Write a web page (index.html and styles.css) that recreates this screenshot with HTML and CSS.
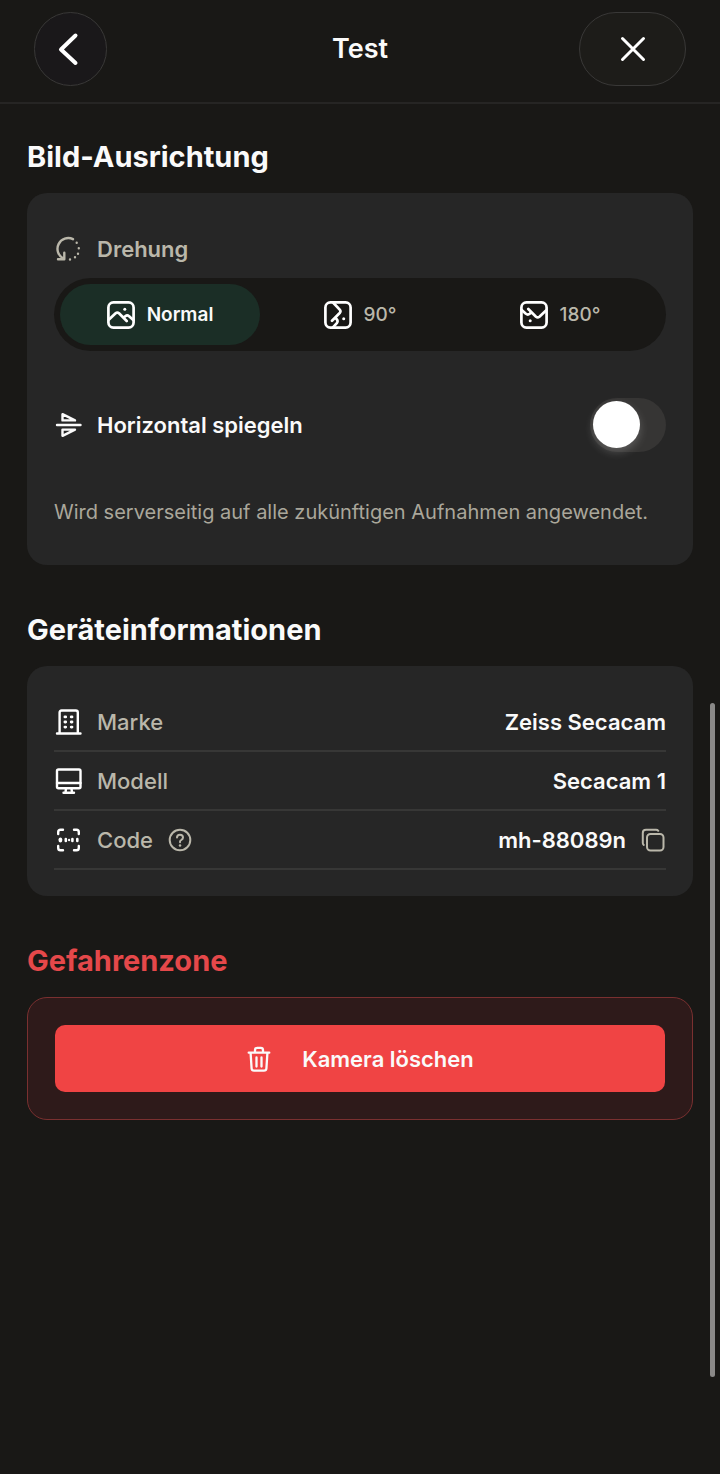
FILE: index.html
```html
<!DOCTYPE html>
<html lang="de">

<head>
    <meta charset="UTF-8">
    <meta name="viewport" content="width=device-width, initial-scale=1.0">
    <title>Test</title>
    <link rel="stylesheet" href="styles.css">
</head>

<body>
    <!-- Gemeinsames Bild-Symbol für die Drehung -->
    <svg class="sprite" aria-hidden="true">
        <symbol id="bild" viewBox="0 0 28 28">
            <rect x="1.4" y="1.4" width="25.2" height="25.2" rx="5" />
            <path d="M2 18.500l6.600-6.200q1.700-1.500 3.400 0l7.700 7.700M16.500 16.800l1.800-1.600q1.900-1.500 3.800 0l4.200 3.800" />
            <path d="M17.800 8.300v.01" stroke-width="3" />
        </symbol>
    </svg>

    <header class="topbar">
        <button type="button" class="round" aria-label="Zurück">
            <svg width="36" height="36" viewBox="0 0 36 36" stroke-width="4"><path d="M22.500 4.500L8 18.500l14.500 13.500" /></svg>
        </button>
        <h1>Test</h1>
        <button type="button" class="round close" aria-label="Schließen">
            <svg width="28" height="28" viewBox="0 0 28 28" stroke-width="3"><path d="M3.500 3.500l21 21M24.500 3.500l-21 21" /></svg>
        </button>
    </header>

    <main>
        <!-- AUSRICHTUNG -->
        <section>
            <h2>Bild-Ausrichtung</h2>
            <div class="card">
                <div class="label-row" id="drehung">
                    <svg class="icon" viewBox="0 0 28 28">
                        <path d="M19 4.200A10.300 10.300 0 0 0 9.500 23.500M4 24.300h6.300v-6.500" />
                        <path d="M22.700 7.700v.01M24.800 13.300v.01M24 18.800v.01M21 22.300v.01M16 24.500v.01" />
                    </svg>
                    <span>Drehung</span>
                </div>
                <div class="segments" role="group" aria-labelledby="drehung">
                    <button type="button" class="active" aria-pressed="true"><svg class="icon"><use href="#bild" /></svg>Normal</button>
                    <button type="button" aria-pressed="false"><svg class="icon turn90"><use href="#bild" /></svg>90°</button>
                    <button type="button" aria-pressed="false"><svg class="icon turn180"><use href="#bild" /></svg>180°</button>
                </div>
                <div class="mirror">
                    <svg class="icon" viewBox="0 0 28 28">
                        <path d="M3 14h23.500M8.500 3.200v6.200h12.500zM8.500 24.800v-6.200h12.500z" />
                    </svg>
                    <label for="spiegeln">Horizontal spiegeln</label>
                    <input type="checkbox" id="spiegeln" class="switch" role="switch">
                </div>
                <p class="note">Wird serverseitig auf alle zukünftigen Aufnahmen angewendet.</p>
            </div>
        </section>

        <!-- GERÄT -->
        <section>
            <h2>Geräteinformationen</h2>
            <dl class="card info">
                <div class="info-row">
                    <dt>
                        <svg class="icon" viewBox="0 0 28 28">
                            <path d="M3 25.500h23.500M5.600 25.500V4.500q0-2 2-2h14.200q2 0 2 2v21" />
                            <path d="M10.900 8.900h.8M17.200 8.900h.8M10.900 14h.8M17.200 14h.8M10.900 19.100h.8M17.200 19.100h.8" stroke-width="2.800" />
                        </svg>
                        Marke
                    </dt>
                    <dd>Zeiss Secacam</dd>
                </div>
                <div class="info-row">
                    <dt>
                        <svg class="icon" viewBox="0 0 28 28">
                            <rect x="3" y="2.500" width="23.500" height="18.700" rx="1.500" />
                            <path d="M3 16h23.500M12 21.500l-.5 4M17.500 21.500l.5 4M9.500 25.800h10.500" />
                        </svg>
                        Modell
                    </dt>
                    <dd>Secacam 1</dd>
                </div>
                <div class="info-row">
                    <dt>
                        <svg class="icon" viewBox="0 0 28 28">
                            <path d="M4.200 8V6q0-2.300 2.300-2.300H9M20 3.700h2.500Q24.800 3.700 24.800 6v2M24.800 20v2q0 2.300-2.300 2.300H20M9 24.300H6.500Q4.200 24.300 4.200 22v-2" />
                            <path d="M6.400 13.200v1.600" stroke-width="3.600" />
                            <path d="M11.800 13v2M18.400 13v2M23.300 13v2" stroke-width="2.600" />
                            <path d="M15.100 13.800v.4" stroke-width="2.200" />
                        </svg>
                        Code
                        <button type="button" class="plain" aria-label="Hilfe">
                            <svg width="24" height="24" viewBox="0 0 24 24" stroke-width="2">
                                <circle cx="12" cy="12" r="10.300" />
                                <path d="M9 9.500Q9 6.700 12 6.700T15 9.500Q15 11 13.300 12T12 14.200" />
                                <path d="M12 17.500v.01" stroke-width="2.500" />
                            </svg>
                        </button>
                    </dt>
                    <dd>
                        mh-88089n
                        <button type="button" class="plain" aria-label="Code kopieren">
                            <svg width="25" height="24" viewBox="0 0 25 24" stroke-width="2">
                                <rect x="6" y="6" width="16.500" height="16.500" rx="3.500" />
                                <path d="M2.800 17Q1.800 16.200 1.800 15V5Q1.800 1.800 5 1.800h10q1.500 0 2.300 1" />
                            </svg>
                        </button>
                    </dd>
                </div>
            </dl>
        </section>

        <!-- LÖSCHEN -->
        <section>
            <h2 class="danger-title">Gefahrenzone</h2>
            <div class="card danger">
                <button type="button" class="delete">
                    <svg width="26" height="26" viewBox="0 0 26 26" stroke-width="2.300">
                        <path d="M2.700 6.700h20.600M9 6.500V4q0-2.200 2.200-2.200h3.600Q17 1.800 17 4v2.500M4.600 7l1 15.500q.2 2.200 2.400 2.200h10q2.200 0 2.400-2.200L21.400 7M10.500 11.500v9M15.500 11.500v9" />
                    </svg>
                    Kamera löschen
                </button>
            </div>
        </section>
    </main>

    <div class="scroll-thumb"></div>
</body>

</html>
```
FILE: styles.css
```css
* {
    box-sizing: border-box;
}

body {
    margin: 0;
    min-height: 100vh;
    background: #191816;
    color: #fafafa;
    font-family: Inter, "Liberation Sans", sans-serif;
    font-size: 22px;
    font-weight: 600;
    line-height: 28px;
}

button {
    border: none;
    padding: 0;
    background: none;
    color: inherit;
    font: inherit;
    cursor: pointer;
}

svg {
    display: block;
    flex: none;
    fill: none;
    stroke: currentColor;
    stroke-linecap: round;
    stroke-linejoin: round;
}

.sprite {
    position: absolute;
    width: 0;
    height: 0;
}

.icon {
    width: 28px;
    height: 28px;
    stroke-width: 2.4;
}

/* Kopfzeile */
.topbar {
    display: grid;
    grid-template-columns: 1fr auto 1fr;
    align-items: center;
    padding: 12px 34px 16px;
    border-bottom: 2px solid #262524;
}

.topbar h1 {
    margin: 0;
    font-size: 27px;
    font-weight: 600;
}

.round {
    display: flex;
    align-items: center;
    justify-content: center;
    width: 73px;
    height: 74px;
    border: 1px solid #393837;
    border-radius: 37px;
    background: #1a181a;
}

.round svg {
    stroke: #fff;
}

.close {
    justify-self: end;
    width: 107px;
    background: #1d1c19;
}

main {
    padding: 33px 27px;
}

section {
    margin-bottom: 45px;
}

h2 {
    margin: 0 0 16px;
    font-size: 29px;
    font-weight: 700;
    line-height: 40px;
}

.card {
    margin: 0;
    padding: 27px;
    border-radius: 20px;
    background: #262626;
}

/* Drehung */
.label-row {
    display: flex;
    align-items: center;
    gap: 15px;
    height: 58px;
    color: #bab7aa;
}

.segments {
    display: grid;
    grid-template-columns: repeat(3, 1fr);
    padding: 6px;
    border-radius: 37px;
    background: #191816;
}

.segments button {
    display: flex;
    align-items: center;
    justify-content: center;
    gap: 12px;
    height: 61px;
    border-radius: 31px;
    color: #bab7aa;
    font-size: 19px;
    font-weight: 500;
}

.segments .active {
    background: #1b2e26;
    color: #fafafa;
    font-weight: 600;
}

.segments .icon {
    stroke: #fff;
    stroke-width: 2.7;
}

.turn90 {
    transform: rotate(90deg);
}

.turn180 {
    transform: rotate(180deg);
}

.mirror {
    display: flex;
    align-items: center;
    gap: 15px;
    margin-top: 47px;
}

.switch {
    appearance: none;
    width: 76px;
    height: 54px;
    margin: 0 0 0 auto;
    padding: 3px;
    border-radius: 27px;
    background: #363534;
    cursor: pointer;
}

.switch::before {
    content: "";
    display: block;
    width: 47px;
    height: 47px;
    border-radius: 50%;
    background: #fff;
    box-shadow: 0 4px 10px rgba(255, 255, 255, 0.2);
}

.switch:checked::before {
    margin-left: 23px;
}

.note {
    margin: 46px 0 12px;
    color: #aaa79b;
    font-size: 20px;
    font-weight: 400;
}

/* Geräteinformationen */
.info {
    padding-bottom: 26px;
}

.info-row {
    display: flex;
    align-items: center;
    justify-content: space-between;
    height: 59px;
    border-bottom: 2px solid #373736;
}

.info-row dt,
.info-row dd {
    display: flex;
    align-items: center;
    gap: 15px;
    margin: 0;
}

.info-row dt {
    color: #bab7aa;
    font-weight: 500;
}

.info-row .icon {
    stroke: #fff;
}

.plain {
    color: #bab7aa;
}

/* Gefahrenzone */
.danger-title {
    color: #e5484a;
}

.danger {
    border: 1px solid #7a3030;
    background: #2e1a1a;
}

.delete {
    display: flex;
    align-items: center;
    justify-content: center;
    gap: 30px;
    width: 100%;
    height: 67px;
    border-radius: 10px;
    background: #f04444;
}

.scroll-thumb {
    position: fixed;
    top: 703px;
    right: 5px;
    width: 5px;
    height: 674px;
    border-radius: 3px;
    background: #8a8988;
}
```
